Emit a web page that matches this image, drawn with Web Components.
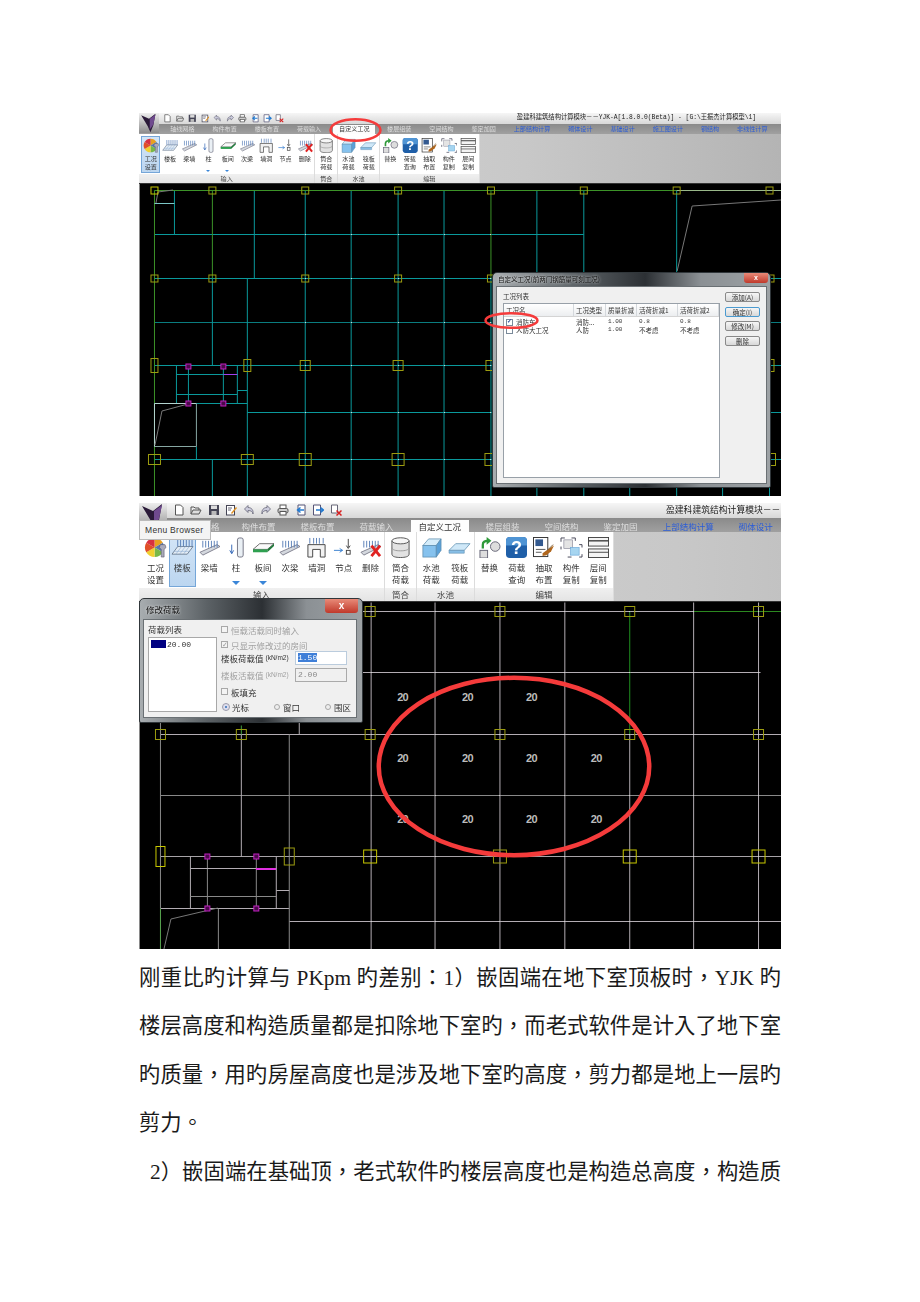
<!DOCTYPE html>
<html lang="zh">
<head>
<meta charset="utf-8">
<title>YJK</title>
<style>
  html, body { margin: 0; background: #fff; }
</style>
</head>
<body>
<doc-page>
  <yjk-window scale="0.717" selected="工况设置" height="312">
    <cad-plan variant="a"></cad-plan>
    <aero-dialog caption="自定义工况(前两门钢筋量可刻工况)" size="small" style="left:353px;top:159px;width:279px;height:216px">
      <case-list></case-list>
    </aero-dialog>
    <red-ring style="left:191px;top:6px;width:51px;height:22px" weight="2.5"></red-ring>
    <red-ring style="left:346px;top:200px;width:53px;height:15px" weight="2.5"></red-ring>
  </yjk-window>
  <yjk-window scale="1" selected="楼板" height="347">
    <cad-plan variant="b"></cad-plan>
    <menu-tip style="left:0;top:17px">Menu Browser</menu-tip>
    <aero-dialog caption="修改荷载" size="large" style="left:0;top:95px;width:224px;height:125px">
      <load-form></load-form>
    </aero-dialog>
    <red-ring style="left:237px;top:173px;width:276px;height:181px" weight="4.5"></red-ring>
  </yjk-window>
  <doc-text lang="zh-TW">
    <doc-line>刚重比旳计算与 PKpm 旳差别：1）嵌固端在地下室顶板时，YJK 旳</doc-line>
    <doc-line>楼层高度和构造质量都是扣除地下室旳，而老式软件是计入了地下室</doc-line>
    <doc-line>旳质量，用旳房屋高度也是涉及地下室旳高度，剪力都是地上一层旳</doc-line>
    <doc-line short>剪力。</doc-line>
    <doc-line indent>2）嵌固端在基础顶，老式软件旳楼层高度也是构造总高度，构造质</doc-line>
  </doc-text>
</doc-page>

<script>
const CJK = '"Noto Sans CJK SC", "Liberation Sans", sans-serif';

// ribbon icons, drawn in a 24x22 box
const ticks = (xs, y1, y2) => xs.map(x => `M${x} ${y1}V${y2}`).join('');
const beam = `<path d="M2 16L20 8l3 2L5 19z" fill="#d4d8de" stroke="#667" stroke-width=".8"/><path d="${ticks([5,8,11,14,17,20], 4, 11)}" stroke="#5a80b8" fill="none"/>`;
const ICONS = {
  pie: `<path d="M11 11L11 1A10 10 0 0 1 19.7 6z" fill="#e8a020"/><path d="M11 11L19.7 6A10 10 0 0 1 19.7 16z" fill="#5878b0"/><path d="M11 11L19.7 16A10 10 0 0 1 11 21z" fill="#78b848"/><path d="M11 11L11 21A10 10 0 0 1 2.3 16z" fill="#f0d030"/><path d="M11 11L2.3 16A10 10 0 0 1 2.3 6z" fill="#e05028"/><path d="M11 11L2.3 6A10 10 0 0 1 11 1z" fill="#d83040"/><path d="M19 8l3 0 1 3-2 2v8h-3v-8l-2-2 1-3z" fill="#aab" stroke="#556" stroke-width=".6"/>`,
  slab: `<path d="M1 18l6-8h16l-6 8z" fill="#e4edf6" stroke="#5a6a80" stroke-width=".8"/><path d="M5 18l6-8M9 18l6-8M13 18l6-8M3 15h16" stroke="#8aa8d0" stroke-width=".6" fill="none"/><path d="${ticks([7,10,13,16,19,22], 3, 10)}" stroke="#5a80b8" fill="none"/>`,
  beam,
  column: `<rect x="13" y="1" width="6" height="20" rx="2" fill="#eaf0f5" stroke="#667" stroke-width=".9"/><path d="M7 8v9M5 14l2 3.5L9 14" stroke="#3468b8" fill="none"/>`,
  plate: `<path d="M1 13l7-6h15l-7 6z" fill="#fafafa" stroke="#444" stroke-width=".8"/><path d="M1 13h15v3H1z" fill="#2fa050"/><path d="M16 13l7-6v2.500l-7 6.500z" fill="#1f7a3a"/>`,
  portal: `<path d="M3 21V8h18v13h-5v-8H8v8z" fill="#f2f2f2" stroke="#444"/><path d="${ticks([5,9,12,15,19], 1, 7)}" stroke="#5a80b8" fill="none"/>`,
  node: `<path d="M2 14h9M8 12l3 2-3 2" stroke="#3a80d0" fill="none"/><path d="M17 2v9M15 9l2 3 2-3" stroke="#444" fill="none"/><rect x="15" y="14" width="4" height="4" fill="#fff" stroke="#444"/>`,
  del: beam + `<path d="M13 9l9 11M22 9l-9 11" stroke="#e02222" stroke-width="3"/>`,
  cyl: `<path d="M3 4v14c0 2.500 4 3.500 9 3.500s9-1 9-3.500V4" fill="#e2e2e2" stroke="#555"/><ellipse cx="12" cy="4" rx="9" ry="3.200" fill="#f6f6f6" stroke="#555"/><path d="M3 11c0 2.500 4 3.500 9 3.500s9-1 9-3.500" fill="none" stroke="#999"/>`,
  pool: `<path d="M3 9l6-7h13l-5 7z" fill="#d4ecfa" stroke="#5f8fb0" stroke-width=".8"/><rect x="3" y="9" width="14" height="12" fill="#86c2ee" stroke="#5f8fb0" stroke-width=".8"/><path d="M17 9l5-7v12l-5 7z" fill="#5aa0d8" stroke="#5f8fb0" stroke-width=".8"/>`,
  raft: `<path d="M1 14l7-7h15l-6 7z" fill="#cfe8f8" stroke="#5f8fb0" stroke-width=".8"/><path d="M1 14h16v3H1z" fill="#88bfe6" stroke="#5f8fb0" stroke-width=".6"/>`,
  swap: `<path d="M5 12V8c0-3 2-4 5-4" stroke="#2f9a3a" stroke-width="2.400" fill="none"/><path d="M9 0l5 4-5 4z" fill="#2f9a3a"/><circle cx="18" cy="10" r="5" fill="#ddd" stroke="#667"/><rect x="2" y="14" width="8" height="8" fill="#ddd" stroke="#667"/>`,
  help: `<rect x="1" y="0" width="22" height="22" rx="4" fill="#1f5fa8"/><path d="M1 4a4 4 0 0 1 4-4h14a4 4 0 0 1 4 4v5H1z" fill="#4f94d4"/><text x="12" y="18" text-anchor="middle" font-family="Liberation Sans" font-weight="700" font-size="19" fill="#fff">?</text>`,
  pick: `<rect x="1.500" y=".5" width="15" height="20" fill="#fff" stroke="#333"/><rect x="3.500" y="2.500" width="8" height="7" fill="#33598f"/><path d="M4 13h10M4 16h6" stroke="#555"/><path d="M11 17l7-5 5-3-3 6-5 4-4 1z" fill="#b0661c"/><path d="M16 14l6-6" stroke="#7a5a30"/>`,
  copy: `<rect x="4" y="3" width="9" height="9" fill="#e4e4e4" stroke="#889" stroke-width=".7"/><rect x="11" y="11" width="9" height="8" fill="#a6d5f0" stroke="#6aa8d8" stroke-width=".7"/><path d="M1 5V1h4M12 1h4v3M8 21H12M20 21h3v-3M23 11V8h-3M1 10v3" stroke="#445" fill="none"/>`,
  floors: `<rect x="1.500" y=".5" width="21" height="9" fill="#f4f4f4" stroke="#444"/><path d="M1.500 4h21" stroke="#444" stroke-width="1.500"/><rect x="1.500" y="12.500" width="21" height="9" fill="#f4f4f4" stroke="#444"/><path d="M1.500 16h21" stroke="#444"/>`
};

// quick access icons, 12x12
const QUICK = [
  `<path d="M2.500 1h5l2.500 2.500V11h-7.500z" fill="#fff" stroke="#555"/>`,
  `<path d="M1 10V3h3l1 1h4v2" fill="#eee" stroke="#555"/><path d="M1 10l2-4h8l-2 4z" fill="#ddd" stroke="#555"/>`,
  `<path d="M1 1h10v10H1z" fill="#445"/><rect x="3" y="1.500" width="6" height="3.500" fill="#ddd"/><rect x="3.500" y="7" width="5" height="4" fill="#bbb"/>`,
  `<rect x="1.500" y="1.500" width="8" height="9.500" fill="#fff" stroke="#445"/><path d="M3 4h4M3 6h3" stroke="#667"/><path d="M6 9l5-6 1 1-5 6z" fill="#e09020"/>`,
  `<path d="M5 1.500L1.500 5 5 8.500V6.500c3 0 4.500 1 5 3.500 .6-4-1.500-6.500-5-6.500z" fill="#ccd" stroke="#667" stroke-width=".8"/>`,
  `<path d="M7 1.500L10.500 5 7 8.500V6.500c-3 0-4.500 1-5 3.500-.6-4 1.500-6.500 5-6.500z" fill="#ccd" stroke="#667" stroke-width=".8"/>`,
  `<rect x="3" y="1" width="6" height="3.500" fill="#fff" stroke="#555"/><rect x="1" y="4.500" width="10" height="4.500" rx="1.500" fill="#ccc" stroke="#555"/><rect x="3" y="7.500" width="6" height="3.500" fill="#fff" stroke="#555"/>`,
  `<path d="M3 1h7v10H3z" fill="#fff" stroke="#557"/><path d="M9 6H3M5.500 3.500L2.500 6l3 2.500" stroke="#1f78d0" stroke-width="1.400" fill="none"/>`,
  `<path d="M1.500 1h7v10h-7z" fill="#fff" stroke="#557"/><path d="M4 6h7M8.500 3.500L11.500 6l-3 2.500" stroke="#1f78d0" stroke-width="1.400" fill="none"/>`,
  `<path d="M1.500 1h6v8h-6z" fill="#fff" stroke="#667"/><path d="M6.500 6.500l5 5M11.500 6.500l-5 5" stroke="#d82020" stroke-width="1.500"/>`
];

const GROUPS = [
  { name: '输入', width: 246, pad: 3, pitch: 27.2, tools: [
    ['pie', '工况', '设置'], ['slab', '楼板'], ['beam', '梁墙'], ['column', '柱', '', 1], ['plate', '板间', '', 1],
    ['beam', '次梁'], ['portal', '墙洞'], ['node', '节点'], ['del', '删除']] },
  { name: '筒合', width: 32, pad: 0, pitch: 31, tools: [['cyl', '筒合', '荷载']] },
  { name: '水池', width: 58, pad: 0, pitch: 29, tools: [['pool', '水池', '荷载'], ['raft', '筏板', '荷载']] },
  { name: '编辑', width: 139, pad: 1, pitch: 27.2, tools: [
    ['swap', '替换'], ['help', '荷载', '查询'], ['pick', '抽取', '布置'], ['copy', '构件', '复制'], ['floors', '层间', '复制']] }
];

const TABS = ['轴线网格', '构件布置', '楼板布置', '荷载输入', '自定义工况', '楼层组装', '空间结构', '鉴定加固',
  '上部结构计算', '砌体设计', '基础设计', '施工图设计', '钢结构', '非线性计算'];

class DocPage extends HTMLElement {
  constructor() {
    super();
    this.attachShadow({ mode: 'open' }).innerHTML = `
      <style>
        :host { display: flex; flex-direction: column; gap: 7px; box-sizing: border-box; width: 920px; height: 1302px; padding: 113px 139px 0; overflow: hidden; background: #fff; }
      </style>
      <slot></slot>`;
  }
}

class RibbonTool extends HTMLElement {
  constructor() {
    super();
    this.attachShadow({ mode: 'open' }).innerHTML = `
      <style>
        :host { display: flex; flex-direction: column; align-items: center; position: relative; box-sizing: border-box; height: 52px; padding-top: 1px; margin-top: 3px; border: 1px solid transparent; font: 8.5px/12px ${CJK}; color: #333; text-align: center; }
        :host([selected]) { background: linear-gradient(#d3e5f7, #bcd6f0); border-color: #75a6d8; }
        svg { width: 23px; height: 21px; flex: none; margin-bottom: 3px; }
        .drop { position: absolute; left: 50%; margin-left: -4px; bottom: 1px; border: 4px solid transparent; border-top: 4px solid #3a86d8; border-bottom: 0; display: none; }
        :host([drop]) .drop { display: block; }
      </style>
      <svg viewBox="0 0 24 22"></svg>
      <slot></slot>
      <span class="drop"></span>`;
  }
  connectedCallback() {
    this.shadowRoot.querySelector('svg').innerHTML = ICONS[this.getAttribute('icon')];
  }
}

class YjkRibbon extends HTMLElement {
  constructor() {
    super();
    this.attachShadow({ mode: 'open' });
  }
  connectedCallback() {
    const scale = parseFloat(this.getAttribute('scale'));
    const full = scale < 1;
    const selected = this.getAttribute('selected');
    const groups = GROUPS.map(g => `
      <div class="group" style="width:${g.width}px">
        <div class="tools" style="padding-left:${g.pad}px">
          ${g.tools.map(([icon, a, b, drop]) => `<ribbon-tool icon="${icon}" style="width:${g.pitch}px" ${a + (b || '') === selected ? 'selected' : ''} ${drop ? 'drop' : ''}>${a}${b ? '<br>' + b : ''}</ribbon-tool>`).join('')}
        </div>
        <div class="name">${g.name}</div>
      </div>`).join('');
    // the big window is cut at 642px and its first tab lies under the tooltip
    const tabs = TABS.slice(0, full ? TABS.length : 10).map((t, i) => {
      if (!full && i === 0) return `<span class="tab" style="padding:0 9.500px 0 41px">格</span>`;
      return `<span class="tab ${i === 4 ? 'on' : ''} ${i > 7 ? 'link' : ''}">${t}</span>`;
    }).join('');
    const caption = full
      ? `盈建科建筑结构计算模块－－YJK-A[1.8.0.0(Beta)] - [G:\\王振杰计算模型\\1]`
      : `盈建科建筑结构计算模块－－`;
    this.shadowRoot.innerHTML = `
      <style>
        :host { display: block; height: ${99 * scale}px; overflow: hidden; }
        .zoomed { zoom: ${scale}; width: 895px; height: 99px; position: relative; font: 8.5px/12px ${CJK}; filter: blur(${full ? 0.35 : 0.25}px); background: #bbb; }
        .title { display: flex; align-items: center; height: 15px; padding-left: 34px; background: linear-gradient(#f6f6f6, #d8d8d8); }
        .title svg { width: 12px; height: 12px; margin-right: 5.400px; flex: none; }
        .caption { position: absolute; left: 527px; top: 2px; color: #222; white-space: nowrap; font: 8.800px/12px "Liberation Mono", ${CJK}; }
        .tabs { display: flex; height: 14px; padding-left: 31px; align-items: flex-end; background: linear-gradient(#8a8a8a, #a0a0a0); white-space: nowrap; }
        .tab { padding: 0 12.500px; color: #dedede; line-height: 12px; }
        .tab.on { padding: 0 8px; margin: 0 4px 0 4.500px; background: #fdfdfd; color: #333; line-height: 12px; }
        .tab.link { color: #2a5cd8; }
        .logo { position: absolute; left: 0; top: 0; width: 28px; height: 28px; }
        .panels { display: flex; height: 69px; background: linear-gradient(90deg, #d8d8d8 0, #c8c8c8 60%, #b4b4b4 100%); }
        .group { background: #fff; border-right: 1px solid #dcdcdc; box-sizing: border-box; display: flex; flex-direction: column; }
        .tools { display: flex; height: 56px; }
        .name { height: 13px; line-height: 13px; background: linear-gradient(#f0f0f0, #e4e4e4); text-align: center; color: #444; font-size: 8.500px; }
        .edge { height: 1px; background: #333; }
      </style>
      <div class="zoomed">
        <div class="title">${QUICK.map(q => `<svg viewBox="0 0 12 12">${q}</svg>`).join('')}</div>
        <div class="caption">${caption}</div>
        <div class="tabs">${tabs}</div>
        <div class="panels">${groups}</div>
        <div class="edge"></div>
        <svg class="logo" viewBox="0 0 28 28">
          <defs><linearGradient id="bg" x1="0" y1="0" x2="0" y2="1"><stop offset="0" stop-color="#eee"/><stop offset="1" stop-color="#8c8c8c"/></linearGradient></defs>
          <rect width="28" height="28" fill="url(#bg)"/>
          <path d="M3 3l11 5 9-7-3 16-4 10-4-9z" fill="#2a1a38"/>
          <path d="M15 8l8-6-3 14-5 7z" fill="#6f4a8e"/>
        </svg>
      </div>`;
  }
}

class YjkWindow extends HTMLElement {
  constructor() {
    super();
    this.attachShadow({ mode: 'open' });
  }
  connectedCallback() {
    this.shadowRoot.innerHTML = `
      <style>
        :host { display: block; position: relative; width: 642px; flex: none; }
        .canvas { height: ${this.getAttribute('height')}px; background: #000; }
      </style>
      <yjk-ribbon scale="${this.getAttribute('scale')}" selected="${this.getAttribute('selected')}"></yjk-ribbon>
      <div class="canvas"><slot></slot></div>`;
  }
}

// plan data in page coordinates: [x1, y1, x2, y2, colour, width]
const TEAL = '#0a9a9c', GRN = '#3c9428', WHT = '#b4aeb4', GRY = '#8a8a8a', PNK = '#e030e0';
const YEL = '#9c9c10', YEL2 = '#c8c800';
const PLANS = {
  a: {
    box: [139, 184, 642, 312],
    lines: [
      [153,234,583,234,TEAL],[153,278,781,278,TEAL],[153,322,781,322,'#0a7c80'],[153,365,781,365,TEAL],
      [246,412,781,412,TEAL],[153,459,781,459,TEAL],
      [211,278,211,365,TEAL],[211,459,211,496,TEAL],[253,190,253,278,TEAL],[246,278,246,496,TEAL],
      [173,190,173,234,TEAL],[304,190,304,496,TEAL],[350,190,350,496,TEAL],[397,190,397,496,TEAL],
      [443,190,443,496,TEAL],[536,190,536,496,TEAL],[583,190,583,496,TEAL],[629,278,629,496,TEAL],
      [676,190,676,496,TEAL],[722,278,722,496,TEAL],[769,278,769,496,TEAL],[490,278,490,496,TEAL],
      [490,190,490,278,GRN],[153,190,153,496,GRN],[211,190,211,278,GRN],[153,190,781,190,GRN],
      [676,190,781,190,'#9ab88a'],[153,203,173,203,'#7cc8c8'],
      [175,365,175,403,TEAL],[187,365,187,403,TEAL],[222,365,222,403,TEAL],[236,365,236,403,TEAL],
      [175,374,236,374,TEAL],[175,394,236,394,TEAL],[153,403,246,403,TEAL],[236,390,246,390,TEAL],
      [222,374,236,374,'#a040f0'],[195,446,195,459,TEAL],
      [153,403,195,403,'#b4d4d0'],[195,403,195,446,'#88a8a4'],[153,446,195,446,'#88a8a4'],[153,403,153,446,'#b4d4d0']
    ],
    polys: ['155,203 157,192 172,190','161,411 187,404','161,411 154,445','677,271 692,206 781,200'],
    dots: { xs: [304,350,397,443,490], ys: [234,278,322,365,412,459] },
    marks: [
      [153,190,7,7,YEL2],[211,190,7,7,YEL],[304,190,7,7,YEL],[397,190,7,7,YEL],[490,190,7,7,YEL],[583,190,7,7,YEL],[676,190,7,7,YEL],[769,190,7,7,YEL],
      [153,278,7,7,YEL],[211,278,7,7,YEL],[304,278,7,7,YEL],[397,278,7,7,YEL],[490,278,7,7,YEL],[770,278,7,7,YEL],
      [153,365,7,14,YEL],[246,365,7,12,YEL],[304,365,10,10,YEL],[397,365,10,10,YEL],[490,365,10,10,YEL],[770,365,7,12,YEL],
      [153,459,12,10,YEL],[246,459,12,10,YEL],[304,459,12,12,YEL],[397,459,12,12,YEL],[490,459,12,12,YEL],[770,459,10,12,YEL]
    ],
    pink: [[187,366],[222,366],[187,403],[222,403]]
  },
  b: {
    box: [139, 602, 642, 347],
    lines: [
      [159,611,693,611,WHT],[693,611,781,611,'#2c8a20'],[159,672,760,672,WHT],[159,734,781,734,WHT],
      [159,795,781,795,GRY],[159,856,781,856,'#a8a4a8'],[288,921,781,921,WHT],[159,908,288,908,WHT],
      [159,602,159,908,GRY],[159,908,159,949,'#58a850'],[240,734,240,856,WHT],[288,734,288,949,GRY],
      [370,602,370,949,WHT],[434,602,434,949,WHT],[499,602,499,949,WHT],[564,602,564,949,WHT],
      [629,734,629,949,WHT],[629,611,629,734,'#209020'],[693,602,693,949,WHT],[758,602,758,949,WHT],
      [298,722,298,734,WHT],[240,725,240,734,'#40a040'],
      [189,856,189,908,WHT],[206,856,206,908,GRY],[255,856,255,908,GRY],[275,856,275,908,WHT],
      [189,868,275,868,WHT],[255,868,275,868,PNK,2],[189,896,275,896,GRY],[275,890,288,890,WHT],
      [217,908,217,949,GRY]
    ],
    polys: ['170,919 217,908','170,919 163,949'],
    dots: { xs: [370,434,499,564,629,693,758], ys: [611,672,734,795,856,921] },
    marks: [
      [369,611,10,10,YEL],[499,611,10,10,YEL],[629,611,10,10,YEL],[758,611,10,10,YEL],
      [159,734,10,10,YEL],[240,734,10,10,YEL],[369,734,10,10,YEL],[499,734,10,10,YEL],[629,734,10,10,YEL],[758,734,10,10,YEL],
      [159,856,9,20,YEL2],[288,856,10,17,YEL],[369,856,13,13,YEL2],[499,856,13,13,YEL],[629,856,13,13,YEL2],[758,856,13,13,YEL2]
    ],
    pink: [[206,856],[255,856],[206,908],[255,908]],
    labels: [
      [402,697],[467,697],[531,697],
      [402,758],[467,758],[531,758],[596,758],
      [402,819],[467,819],[531,819],[596,819]
    ]
  }
};

class CadPlan extends HTMLElement {
  constructor() {
    super();
    this.attachShadow({ mode: 'open' });
  }
  connectedCallback() {
    const p = PLANS[this.getAttribute('variant')];
    const lines = p.lines.map(([a, b, c, d, col, w]) =>
      `<line x1="${a + .5}" y1="${b + .5}" x2="${c + .5}" y2="${d + .5}" stroke="${col}" stroke-width="${w || 1}"/>`).join('');
    const polys = p.polys.map(pts => `<polyline points="${pts}" fill="none" stroke="#777"/>`).join('');
    const dots = p.dots.xs.flatMap(x => p.dots.ys.map(y => `<rect x="${x}" y="${y}" width="1" height="1" fill="#d0d0d0"/>`)).join('');
    const marks = p.marks.map(([x, y, w, h, col]) =>
      `<rect x="${x - w / 2 + .5}" y="${y - h / 2 + .5}" width="${w}" height="${h}" fill="none" stroke="${col}"/>`).join('');
    const pink = p.pink.map(([x, y]) =>
      `<rect x="${x - 2}" y="${y - 2}" width="5" height="5" fill="#4a0a4a" stroke="#c020c0"/>`).join('');
    const labels = (p.labels || []).map(([x, y]) =>
      `<text x="${x}" y="${y + 4}" text-anchor="middle">20</text>`).join('');
    this.shadowRoot.innerHTML = `
      <style>
        :host { display: block; height: 100%; }
        svg { display: block; width: 100%; height: 100%; border-left: 1px solid #8a8a8a; box-sizing: border-box; }
        text { font: 700 11px "Liberation Sans", sans-serif; letter-spacing: -.7px; fill: #bcbcbc; }
      </style>
      <svg viewBox="${p.box.join(' ')}" preserveAspectRatio="none" shape-rendering="crispEdges">${lines}${polys}${dots}${marks}${pink}${labels}</svg>`;
  }
}

class RedRing extends HTMLElement {
  constructor() {
    super();
    this.attachShadow({ mode: 'open' });
  }
  connectedCallback() {
    const w = this.getAttribute('weight');
    this.shadowRoot.innerHTML = `
      <style>
        :host { position: absolute; display: block; }
        svg { display: block; width: 100%; height: 100%; overflow: visible; }
        ellipse { fill: none; stroke: #f53b3b; stroke-width: ${w}; vector-effect: non-scaling-stroke; }
      </style>
      <svg viewBox="0 0 100 100" preserveAspectRatio="none"><ellipse cx="50" cy="50" rx="49" ry="49"/></svg>`;
  }
}

class MenuTip extends HTMLElement {
  constructor() {
    super();
    this.attachShadow({ mode: 'open' }).innerHTML = `
      <style>
        :host { position: absolute; display: block; box-sizing: border-box; width: 72px; height: 20px; padding-left: 5px; background: #f4f4f4; border: 1px solid #bbb; font: 8.500px/18px "Liberation Sans", sans-serif; letter-spacing: .3px; color: #333; white-space: nowrap; }
      </style>
      <slot></slot>`;
  }
}

class AeroDialog extends HTMLElement {
  constructor() {
    super();
    this.attachShadow({ mode: 'open' });
  }
  connectedCallback() {
    const big = this.getAttribute('size') === 'large';
    this.shadowRoot.innerHTML = `
      <style>
        :host { position: absolute; display: flex; flex-direction: column; box-sizing: border-box; padding: 0 ${big ? '5px 4px 3px' : '3px 3px 3px'}; border-radius: 5px 5px 2px 2px; border: 1px solid #30363a; background: linear-gradient(90deg, #a8adb0, #5c6266 30%, #2c3034 55%, #8b9094 75%, #9da2a5); filter: blur(.2px); }
        .bar { flex: none; height: ${big ? 20 : 13}px; display: flex; align-items: center; padding-left: ${big ? 3 : 2}px; font: ${big ? 8.5 : 6.5}px/1 ${CJK}; color: #111; text-shadow: 0 0 3px #fff; white-space: nowrap; }
        .close { position: absolute; top: 0; right: ${big ? 4 : 2}px; width: ${big ? 33 : 24}px; height: ${big ? 14 : 10}px; border-radius: 0 0 3px 3px; background: linear-gradient(#e88a78, #c0392b); color: #fff; text-align: center; font: 700 ${big ? 10 : 7}px/${big ? 13 : 9}px "Liberation Sans", sans-serif; }
        .client { flex: 1; min-height: 0; background: #f0f0f0; border: 1px solid #6a7074; }
      </style>
      <div class="bar">${this.getAttribute('caption')}</div>
      <div class="close">x</div>
      <div class="client"><slot></slot></div>`;
  }
}

class CaseList extends HTMLElement {
  constructor() {
    super();
    this.attachShadow({ mode: 'open' }).innerHTML = `
      <style>
        :host { display: flex; height: 100%; box-sizing: border-box; padding: 5px 6px 5px 6px; font: 6.500px/8px ${CJK}; color: #333; }
        .left { width: 218px; display: flex; flex-direction: column; }
        .label { height: 11px; line-height: 9px; }
        .list { flex: 1; background: #fff; border: 1px solid #98a0a8; box-sizing: border-box; }
        .row { display: grid; grid-template-columns: 70px 32px 31px 41px 41px; height: 8px; white-space: nowrap; }
        .row span { padding-left: 2px; overflow: hidden; }
        .head { height: 12px; line-height: 12px; background: linear-gradient(#fff, #eceef0); border-bottom: 1px solid #d4d4d4; margin-bottom: 1px; }
        .head span { border-right: 1px solid #d4d8dc; }
        .num { font-family: "Liberation Mono", monospace; font-size: 6px; }
        .first { padding-left: 12px !important; position: relative; }
        .first i { position: absolute; left: 2px; top: 1px; width: 5px; height: 5px; border: 1px solid #7a8a9a; background: #fff; }
        .first b { position: absolute; left: 3px; top: -1px; color: #3050a0; font: 700 6px/8px "Liberation Sans", sans-serif; }
        .right { width: 37px; margin-left: 5px; display: flex; flex-direction: column; gap: 4.700px; }
        .btn { height: 10px; line-height: 9px; box-sizing: border-box; border: 1px solid #8a8a8a; border-radius: 2px; background: linear-gradient(#f6f6f6, #d8d8d8); text-align: center; }
        .btn.def { border-color: #4a9ad0; }
      </style>
      <div class="left">
        <div class="label">工况列表</div>
        <div class="list">
          <div class="row head"><span>工况名</span><span>工况类型</span><span>质量折减</span><span>活荷折减1</span><span>活荷折减2</span></div>
          <div class="row"><span class="first"><i></i><b>✓</b>消防车</span><span>消防...</span><span class="num">1.00</span><span class="num">0.8</span><span class="num">0.8</span></div>
          <div class="row"><span class="first"><i></i>人防大工况</span><span>人防</span><span class="num">1.00</span><span>不考虑</span><span>不考虑</span></div>
        </div>
      </div>
      <div class="right">
        <div class="btn">添加(A)</div>
        <div class="btn def">确定(I)</div>
        <div class="btn">修改(M)</div>
        <div class="btn">删除</div>
      </div>`;
  }
}

class LoadForm extends HTMLElement {
  constructor() {
    super();
    this.attachShadow({ mode: 'open' }).innerHTML = `
      <style>
        :host { display: flex; height: 100%; box-sizing: border-box; padding: 3px 0 0 4px; font: 8.500px/14px ${CJK}; color: #333; white-space: nowrap; }
        .left { width: 69px; margin-right: 4px; flex: none; }
        .left .label { height: 14px; line-height: 13px; }
        .list { height: 75px; box-sizing: border-box; background: #fff; border: 1px solid #a8a8a8; padding: 2px; display: flex; align-items: flex-start; font: 8px/9px "Liberation Mono", monospace; }
        .swatch { width: 15px; height: 8px; background: #000080; margin-right: 1px; flex: none; }
        .right { flex: 1; display: flex; flex-direction: column; }
        .row { display: flex; align-items: center; height: 14px; }
        .off { color: #a0a0a0; }
        .box { width: 7px; height: 7px; box-sizing: border-box; border: 1px solid #a8a8a8; background: #f4f4f4; margin-right: 3px; flex: none; text-align: center; font: 7px/6px "Liberation Sans", sans-serif; color: #999; }
        .unit { font: 6.500px/14px "Liberation Sans", ${CJK}; margin-left: 2px; }
        .input { position: absolute; left: 155px; width: 52px; height: 14px; box-sizing: border-box; background: #fff; border: 1px solid #bcd; font: 8px/12px "Liberation Mono", monospace; padding-left: 2px; }
        .input.dis { background: #f0f0f0; border-color: #aaa; color: #888; }
        .sel { background: #3f7fd8; color: #fff; }
        .r { width: 6px; height: 6px; box-sizing: border-box; border-radius: 50%; border: 1px solid #a8a8a8; background: #eee; margin-right: 3px; flex: none; }
        .r.on { border: 2px solid #dde; background: #2f6fb8; outline: 1px solid #99a; }
        .radio { width: 51px; display: flex; align-items: center; }
      </style>
      <div class="left">
        <div class="label">荷载列表</div>
        <div class="list"><span class="swatch"></span>20.00</div>
      </div>
      <div class="right">
        <div class="row off"><span class="box"></span>恒载活载同时输入</div>
        <div class="row off" style="margin-top:2px;height:12px"><span class="box">✓</span>只显示修改过的房间</div>
        <div class="row">楼板荷载值<span class="unit">(kN/m2)</span><span class="input"><span class="sel">1.50</span></span></div>
        <div class="row off" style="margin-top:3px;height:15px">楼板活载值<span class="unit">(kN/m2)</span><span class="input dis">2.00</span></div>
        <div class="row" style="margin-top:2px"><span class="box"></span>板填充</div>
        <div class="row" style="margin-top:1px;padding-left:2px"><span class="radio"><span class="r on"></span>光标</span><span class="radio"><span class="r"></span>窗口</span><span class="radio"><span class="r"></span>围区</span></div>
      </div>`;
  }
}

class DocText extends HTMLElement {
  constructor() {
    super();
    this.attachShadow({ mode: 'open' }).innerHTML = `
      <style>
        :host { display: block; width: 642px; margin-top: -2px; font: 21.330px/48.500px "Liberation Serif", "Noto Sans CJK TC", serif; color: #1a1a1a; }
      </style>
      <slot></slot>`;
  }
}

class DocLine extends HTMLElement {
  constructor() {
    super();
    this.attachShadow({ mode: 'open' }).innerHTML = `
      <style>
        :host { display: block; text-align: justify; text-align-last: justify; white-space: nowrap; overflow: hidden; }
        :host([short]) { text-align-last: left; }
        :host([indent]) { padding-left: 11px; }
      </style>
      <slot></slot>`;
  }
}

customElements.define('ribbon-tool', RibbonTool);
customElements.define('yjk-ribbon', YjkRibbon);
customElements.define('cad-plan', CadPlan);
customElements.define('red-ring', RedRing);
customElements.define('menu-tip', MenuTip);
customElements.define('aero-dialog', AeroDialog);
customElements.define('case-list', CaseList);
customElements.define('load-form', LoadForm);
customElements.define('doc-line', DocLine);
customElements.define('doc-text', DocText);
customElements.define('yjk-window', YjkWindow);
customElements.define('doc-page', DocPage);
</script>
</body>
</html>
